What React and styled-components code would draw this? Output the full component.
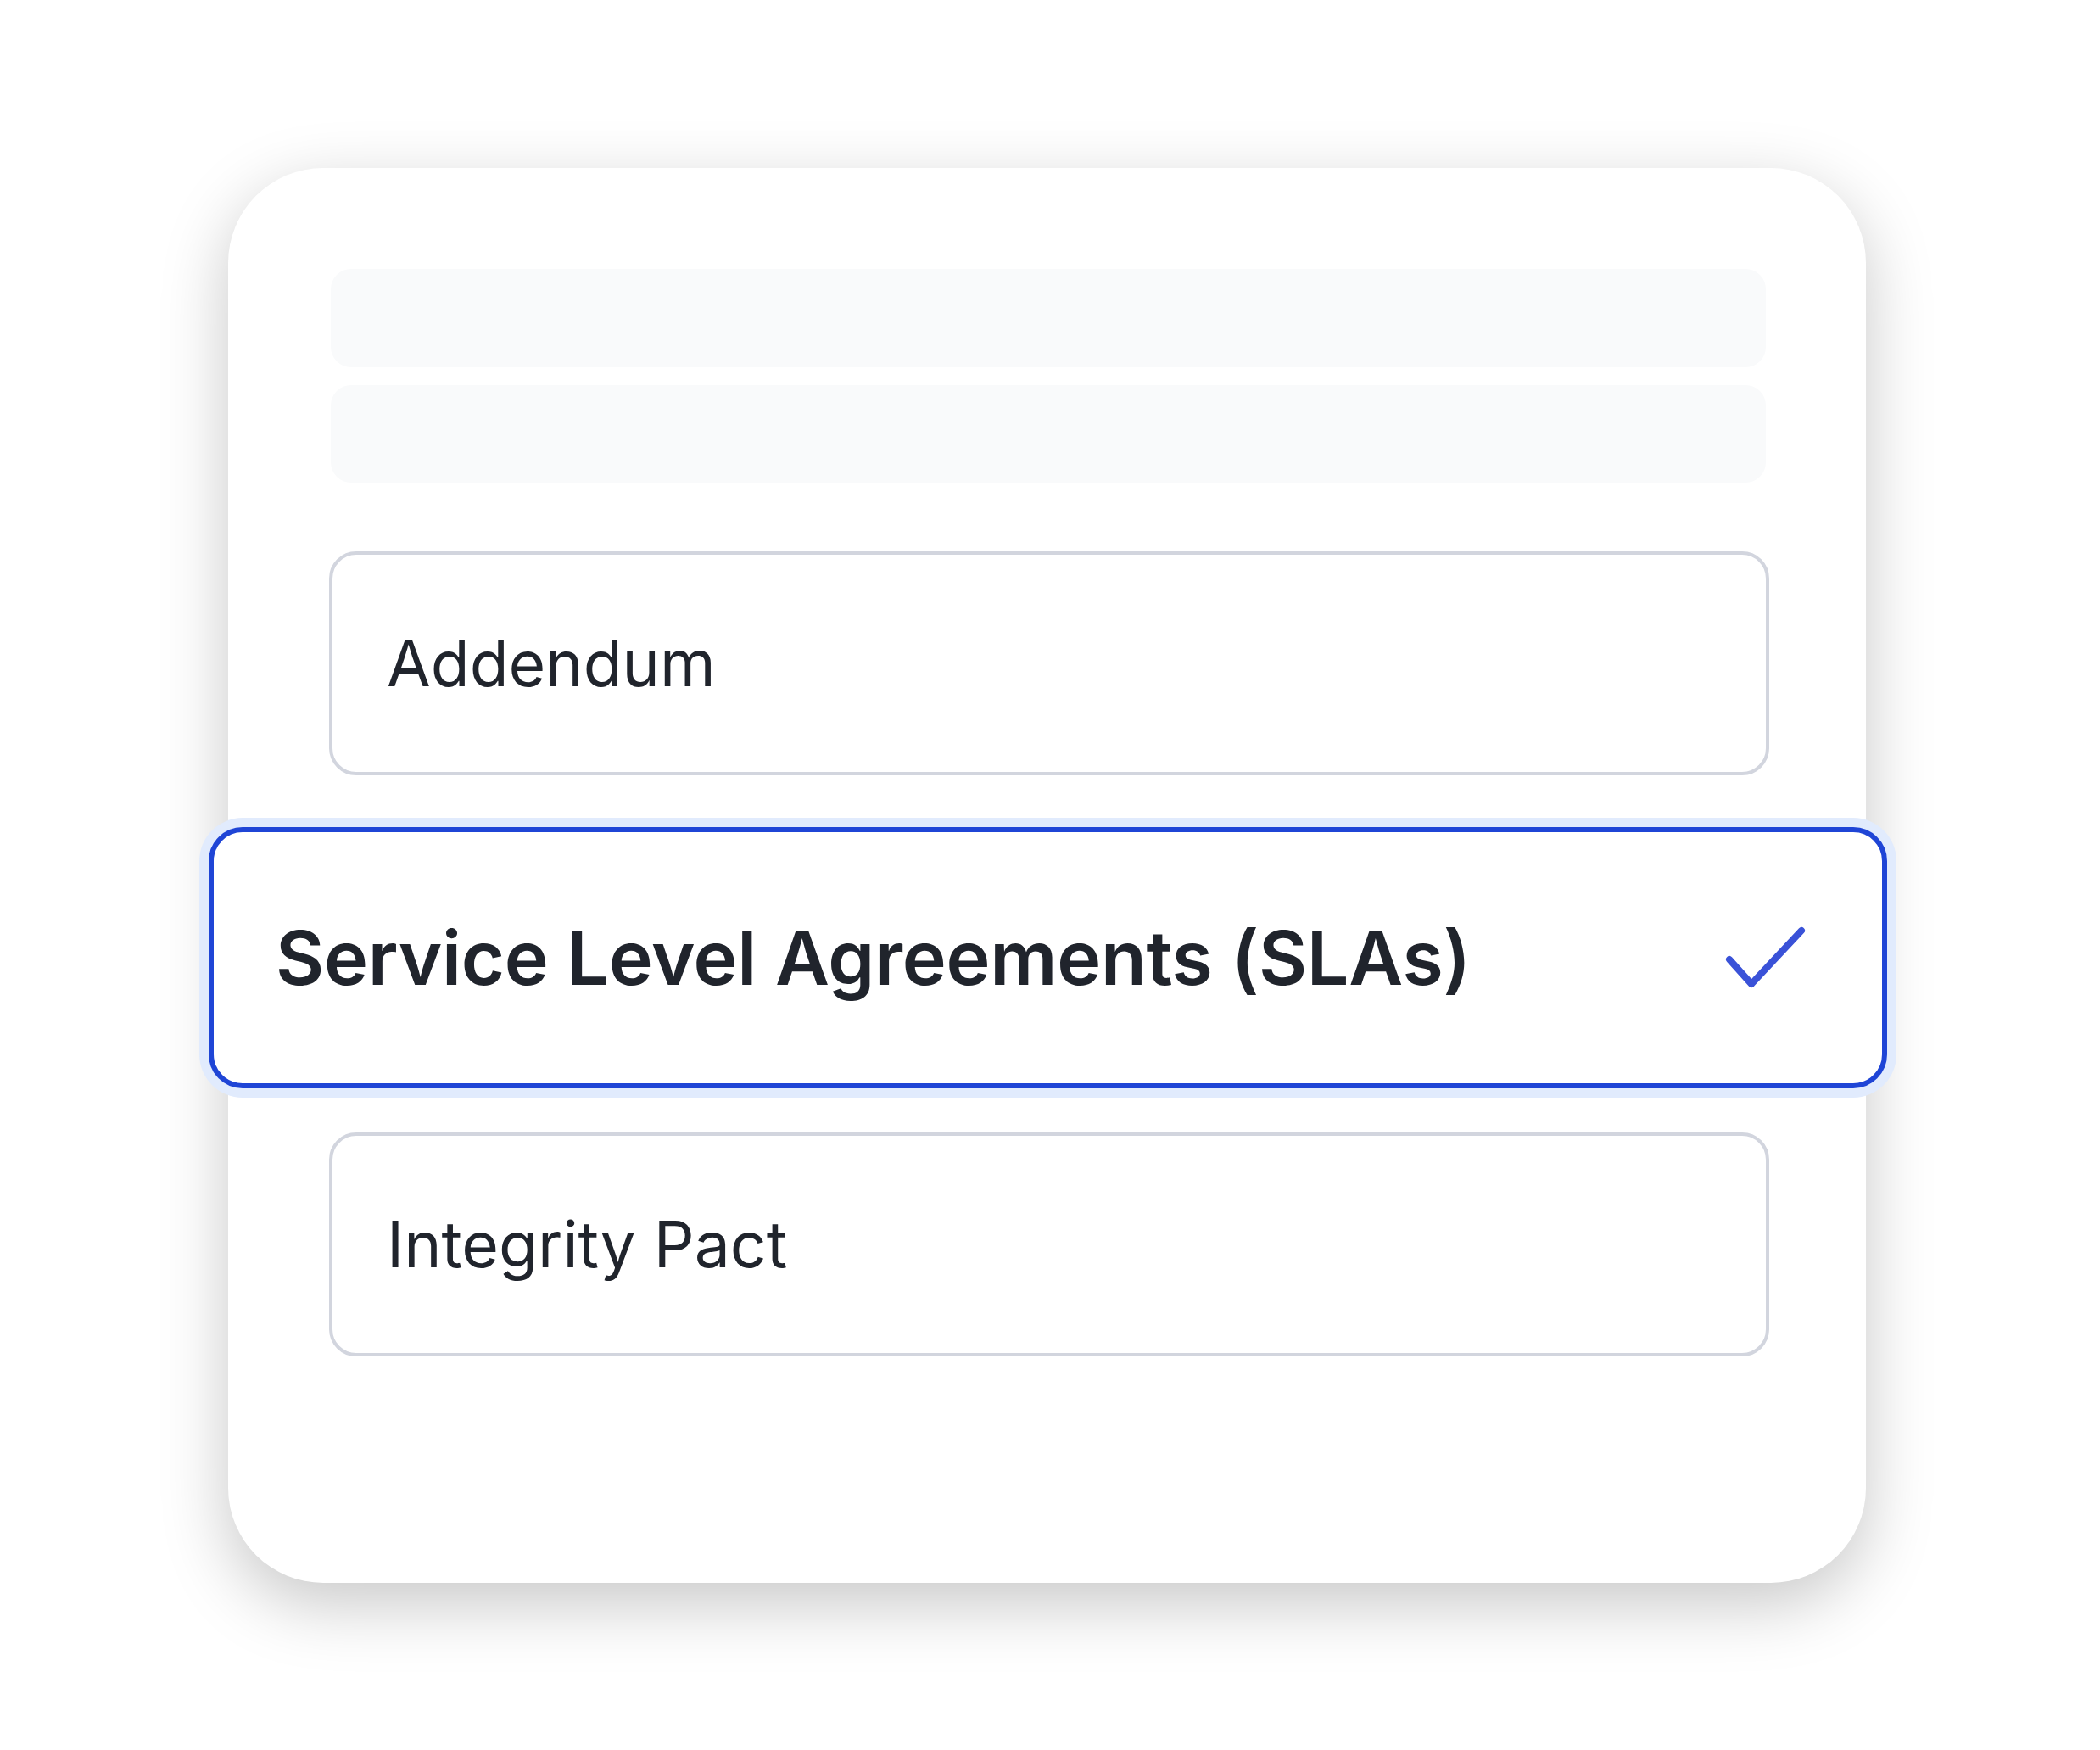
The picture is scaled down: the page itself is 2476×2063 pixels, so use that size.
import React from "react";
import styled, { createGlobalStyle } from "styled-components";

const Global = createGlobalStyle`
  html, body { margin: 0; padding: 0; background: #ffffff; }
  body { font-family: Inter, "Noto Sans", "Liberation Sans", sans-serif; }
`;

const Page = styled.div`
  width: 100vw;
  min-height: 100vh;
  display: flex;
  align-items: center;
  justify-content: center;
  background: #ffffff;
`;

const Card = styled.div`
  width: 1931px;
  height: 1668px;
  margin-right: 7px;
  box-sizing: border-box;
  padding: 119px 114px 0 119px;
  background: #ffffff;
  border-radius: 112px;
  box-shadow: 0 25px 80px rgba(0, 0, 0, 0.22);
  display: flex;
  flex-direction: column;
`;

const SkeletonStack = styled.div`
  display: flex;
  flex-direction: column;
  gap: 21px;
  padding: 0 4px 0 2px;
  margin-bottom: 81px;
`;

const SkeletonBar = styled.div`
  height: ${(p) => p.$h}px;
  border-radius: 24px;
  background: #f9fafb;
`;

const OptionList = styled.div`
  display: flex;
  flex-direction: column;
`;

const Option = styled.div`
  box-sizing: border-box;
  display: flex;
  align-items: center;
  justify-content: space-between;
  background: #ffffff;
  color: #20242c;
  ${(p) =>
    p.$selected
      ? `
    height: 308px;
    margin: 61px -139px 52px -142px;
    padding: 0 90px 0 73px;
    border: 6px solid #1f45d6;
    border-radius: 40px;
    box-shadow: 0 0 0 11px #e1ebfd;
    font-size: 88px;
    font-weight: 600;
    letter-spacing: -0.3px;
  `
      : `
    height: 264px;
    padding: 0 64px 0 64px;
    border: 4px solid #d2d5de;
    border-radius: 32px;
    font-size: 75px;
    font-weight: 400;
  `}
`;

const Label = styled.span`
  line-height: 1;
  white-space: nowrap;
`;

const CheckIcon = () => (
  <svg width="95" height="73" viewBox="0 0 95 73" fill="none">
    <polyline
      points="5,39 31,68 90,5"
      stroke="#3a52d8"
      strokeWidth="8"
      strokeLinecap="round"
      strokeLinejoin="round"
    />
  </svg>
);

const options = [
  { label: "Addendum" },
  { label: "Service Level Agreements (SLAs)", selected: true },
  { label: "Integrity Pact" },
];

export default function App() {
  return (
    <>
      <Global />
      <Page>
        <Card>
          <SkeletonStack>
            <SkeletonBar $h={116} />
            <SkeletonBar $h={115} />
          </SkeletonStack>
          <OptionList>
            {options.map((o) => (
              <Option key={o.label} $selected={o.selected}>
                <Label>{o.label}</Label>
                {o.selected && <CheckIcon />}
              </Option>
            ))}
          </OptionList>
        </Card>
      </Page>
    </>
  );
}
